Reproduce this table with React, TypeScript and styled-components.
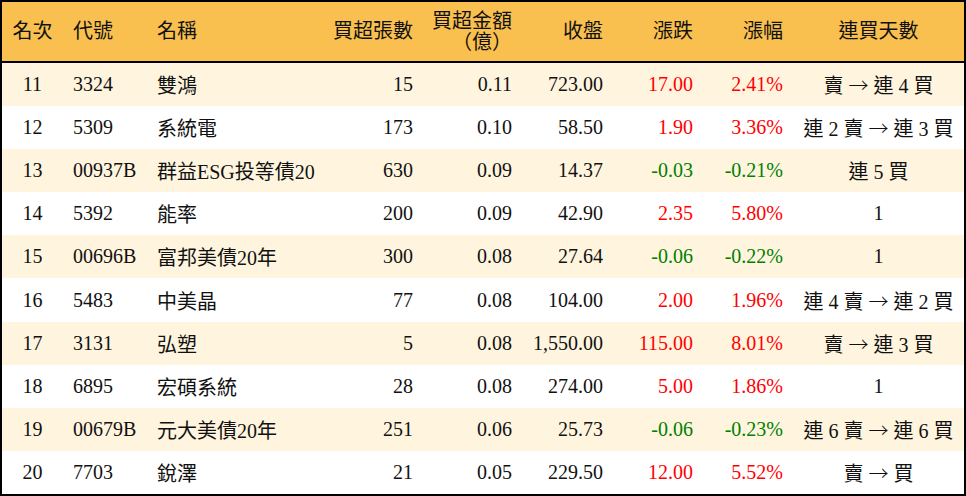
import React from "react";
import styled, { createGlobalStyle } from "styled-components";

const GlobalStyle = createGlobalStyle`
  html, body { margin: 0; padding: 0; background: #ffffff; }
  body { font-family: "Liberation Serif", "Noto Sans CJK TC", serif; }
  * { box-sizing: border-box; }
`;

const COLUMNS = "61px 84px 176px 100px 99px 91px 90px 90px 171px";

type Align = "left" | "right" | "center";
type Tone = "up" | "down" | "plain";

const Board = styled.div`
  width: 966px;
  border: 2px solid #000000;
  background: #ffffff;
  color: #111111;
  font-family: "Liberation Serif", "Noto Sans CJK TC", serif;
  font-size: 20px;
`;

const HeaderRow = styled.div`
  display: grid;
  grid-template-columns: ${COLUMNS};
  height: 61px;
  background: #f9c04f;
  border-bottom: 2px solid #000000;
`;

const HeaderCell = styled.div<{ $align: Align }>`
  display: flex;
  flex-direction: column;
  justify-content: center;
  align-items: ${(p) =>
    p.$align === "left" ? "flex-start" : p.$align === "right" ? "flex-end" : "center"};
  padding: 0 10px;
  line-height: 21px;
  white-space: nowrap;
  text-spacing-trim: space-all;
`;

const Row = styled.div<{ $striped: boolean }>`
  display: grid;
  grid-template-columns: ${COLUMNS};
  height: 43.1px;
  background: ${(p) => (p.$striped ? "#fff5df" : "#ffffff")};
`;

const Cell = styled.div<{ $align: Align; $tone?: Tone }>`
  display: flex;
  align-items: center;
  justify-content: ${(p) =>
    p.$align === "left" ? "flex-start" : p.$align === "right" ? "flex-end" : "center"};
  padding: 0 10px;
  white-space: nowrap;
  color: ${(p) =>
    p.$tone === "up" ? "#ff0000" : p.$tone === "down" ? "#008000" : "#111111"};
`;

const Arrow = styled.span`
  display: inline-block;
  width: 20px;
  margin: 0 5px;
  font-family: "Noto Sans CJK TC", sans-serif;
  font-weight: 300;
  text-align: center;
`;

interface Item {
  rank: number;
  code: string;
  name: string;
  lots: string;
  amount: string;
  close: string;
  change: string;
  pct: string;
  streak: string;
}

const items: Item[] = [
  { rank: 11, code: "3324", name: "雙鴻", lots: "15", amount: "0.11", close: "723.00", change: "17.00", pct: "2.41%", streak: "賣 → 連 4 買" },
  { rank: 12, code: "5309", name: "系統電", lots: "173", amount: "0.10", close: "58.50", change: "1.90", pct: "3.36%", streak: "連 2 賣 → 連 3 買" },
  { rank: 13, code: "00937B", name: "群益ESG投等債20", lots: "630", amount: "0.09", close: "14.37", change: "-0.03", pct: "-0.21%", streak: "連 5 買" },
  { rank: 14, code: "5392", name: "能率", lots: "200", amount: "0.09", close: "42.90", change: "2.35", pct: "5.80%", streak: "1" },
  { rank: 15, code: "00696B", name: "富邦美債20年", lots: "300", amount: "0.08", close: "27.64", change: "-0.06", pct: "-0.22%", streak: "1" },
  { rank: 16, code: "5483", name: "中美晶", lots: "77", amount: "0.08", close: "104.00", change: "2.00", pct: "1.96%", streak: "連 4 賣 → 連 2 買" },
  { rank: 17, code: "3131", name: "弘塑", lots: "5", amount: "0.08", close: "1,550.00", change: "115.00", pct: "8.01%", streak: "賣 → 連 3 買" },
  { rank: 18, code: "6895", name: "宏碩系統", lots: "28", amount: "0.08", close: "274.00", change: "5.00", pct: "1.86%", streak: "1" },
  { rank: 19, code: "00679B", name: "元大美債20年", lots: "251", amount: "0.06", close: "25.73", change: "-0.06", pct: "-0.23%", streak: "連 6 賣 → 連 6 買" },
  { rank: 20, code: "7703", name: "銳澤", lots: "21", amount: "0.05", close: "229.50", change: "12.00", pct: "5.52%", streak: "賣 → 買" },
];

const headers: { lines: string[]; align: Align }[] = [
  { lines: ["名次"], align: "center" },
  { lines: ["代號"], align: "left" },
  { lines: ["名稱"], align: "left" },
  { lines: ["買超張數"], align: "right" },
  { lines: ["買超金額", "（億）"], align: "right" },
  { lines: ["收盤"], align: "right" },
  { lines: ["漲跌"], align: "right" },
  { lines: ["漲幅"], align: "right" },
  { lines: ["連買天數"], align: "center" },
];

function Streak({ text }: { text: string }) {
  const parts = text.split(" → ");
  if (parts.length === 1) return <>{text}</>;
  return (
    <>
      {parts[0]}
      <Arrow>→</Arrow>
      {parts[1]}
    </>
  );
}

export default function App() {
  return (
    <>
      <GlobalStyle />
      <Board>
        <HeaderRow>
          {headers.map((h, i) => (
            <HeaderCell key={i} $align={h.align}>
              {h.lines.map((l) => (
                <span key={l}>{l}</span>
              ))}
            </HeaderCell>
          ))}
        </HeaderRow>
        {items.map((it, i) => {
          const tone: Tone = it.change.startsWith("-") ? "down" : "up";
          return (
            <Row key={it.rank} $striped={i % 2 === 0}>
              <Cell $align="center">{it.rank}</Cell>
              <Cell $align="left">{it.code}</Cell>
              <Cell $align="left">{it.name}</Cell>
              <Cell $align="right">{it.lots}</Cell>
              <Cell $align="right">{it.amount}</Cell>
              <Cell $align="right">{it.close}</Cell>
              <Cell $align="right" $tone={tone}>{it.change}</Cell>
              <Cell $align="right" $tone={tone}>{it.pct}</Cell>
              <Cell $align="center">
                <Streak text={it.streak} />
              </Cell>
            </Row>
          );
        })}
      </Board>
    </>
  );
}
